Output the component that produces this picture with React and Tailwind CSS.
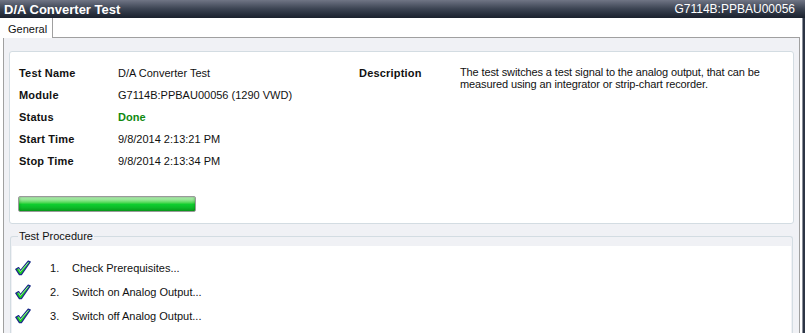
import React from 'react';

const info = [
  { label: 'Test Name', value: 'D/A Converter Test' },
  { label: 'Module', value: 'G7114B:PPBAU00056 (1290 VWD)' },
  { label: 'Status', value: 'Done', done: true },
  { label: 'Start Time', value: '9/8/2014 2:13:21 PM' },
  { label: 'Stop Time', value: '9/8/2014 2:13:34 PM' },
];

const steps = ['Check Prerequisites...', 'Switch on Analog Output...', 'Switch off Analog Output...'];

const Check = () => (
  <svg width="16" height="16" viewBox="0 0 16 16">
    <path
      d="M0.8 9.2 L3.6 7.6 L5.4 10.6 L13.2 1.2 L15.2 1.8 L6.4 14.6 L4.4 14.6 Z"
      fill="#1ed41e"
      stroke="#1c2a8a"
      strokeWidth="1.3"
      strokeLinejoin="round"
    />
    <path d="M3.6 8.6 L5.4 11.6 L13.4 2.4" fill="none" stroke="#a8f7a8" strokeWidth="0.9" />
  </svg>
);

const App = () => {
  return (
    <div className="w-[805px] h-[333px] bg-white flex flex-col overflow-hidden font-['Liberation_Sans',Arial,sans-serif] text-[11px] text-[#111]">
      {/* title bar */}
      <div className="h-[18px] shrink-0 flex items-center justify-between pl-[4px] pr-[10px] bg-gradient-to-b from-[#707585] via-[#3b4352] to-[#1a212d] text-white">
        <span className="font-bold text-[13px] leading-none">D/A Converter Test</span>
        <span className="text-[12px] leading-none">G7114B:PPBAU00056</span>
      </div>

      <div className="flex-1 flex min-h-0">
        <div className="flex-1 flex flex-col min-w-0 pr-[2px]">
          {/* tab strip */}
          <div className="h-[20px] shrink-0 flex">
            <div className="w-[53px] border-r border-[#a0a0a0] bg-white flex items-center pl-[8px] pt-[2px]">
              <span className="text-[11px]">General</span>
            </div>
            <div className="flex-1 border-b border-[#a0a0a0]"></div>
          </div>

          {/* tab page */}
          <div className="flex-1 ml-[3px] border-l border-r border-[#a0a0a0] bg-[#f0f1f5] pl-[5px] pr-[5px] pt-[13px] flex flex-col min-h-0">
            <div className="h-[173px] shrink-0 bg-white border border-[#d3dce2] rounded-[3px] flex flex-col">
              <div className="flex pt-[10px]">
                <div className="w-[349px] pl-[9px]">
                  {info.map((row) => (
                    <div key={row.label} className="flex h-[22px] items-center">
                      <span className="w-[99px] font-bold tracking-[0.2px]">{row.label}</span>
                      <span className={row.done ? 'font-bold text-[#108a10]' : ''}>{row.value}</span>
                    </div>
                  ))}
                </div>
                <div className="flex flex-1">
                  <span className="w-[101px] h-[22px] flex items-center font-bold tracking-[0.2px]">Description</span>
                  <p className="w-[310px] leading-[12px] pt-[4px] tracking-[-0.12px]">
                    The test switches a test signal to the analog output, that can be measured using an integrator or strip-chart recorder.
                  </p>
                </div>
              </div>
              <div className="pl-[8px] pt-[24px]">
                <div className="w-[178px] h-[16px] border border-[#9a9a9a] rounded-[2px] bg-gradient-to-b from-[#c8f7c8] via-[#10d030] to-[#0aa620] shadow-[inset_0_0_3px_rgba(0,90,0,0.5)]"></div>
              </div>
            </div>

            {/* group box */}
            <div className="relative flex-1 mt-[12px] ml-[1px] mr-[1px] border-t border-l border-r border-[#d3dce2] rounded-t-[3px] pt-[9px] px-[1px] flex flex-col min-h-0">
              <span className="absolute left-[7px] -top-[7px] px-[1px] bg-[#f0f1f5] leading-[12px]">Test Procedure</span>
              <div className="flex-1 bg-white pt-[10px] pl-[3px]">
                {steps.map((s, i) => (
                  <div key={s} className="flex items-center h-[24px]">
                    <Check />
                    <span className="w-[22px] ml-[19px]">{i + 1}.</span>
                    <span>{s}</span>
                  </div>
                ))}
              </div>
            </div>
          </div>
        </div>
        <div className="w-[3px] shrink-0 flex">
          <div className="w-[1px] bg-[#8a8f9a]"></div>
          <div className="w-[2px] bg-[#2c3444]"></div>
        </div>
      </div>
    </div>
  );
};

export default App;
